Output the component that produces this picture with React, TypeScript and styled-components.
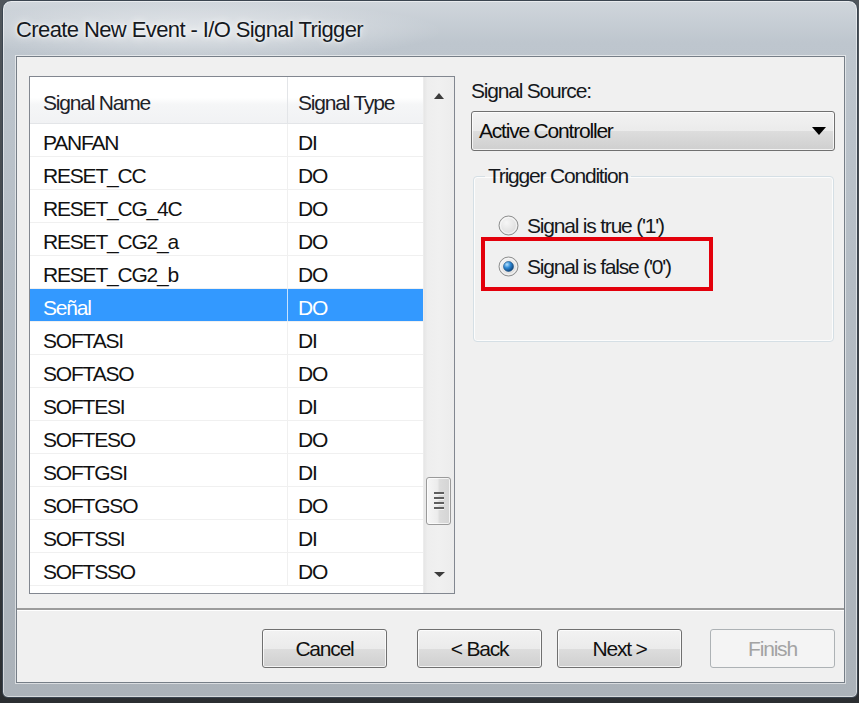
import React from "react";
import styled, { createGlobalStyle, css } from "styled-components";

const UI_FONT = `"Liberation Sans", Arial, sans-serif`;

// Segoe UI in the reference is narrower than Arial metrics: tighten tracking
const uiText = css`
  font-family: ${UI_FONT};
  font-size: 21px;
  letter-spacing: -1.2px;
`;

const GlobalStyle = createGlobalStyle`
  html, body {
    margin: 0;
    padding: 0;
  }
  body {
    background: #2e3236;
    font-family: ${UI_FONT};
    overflow: hidden;
  }
`;

const Desktop = styled.div`
  width: 859px;
  height: 703px;
  box-sizing: border-box;
  padding: 0 1px 0 2px;
  background: linear-gradient(180deg, #50565c 0%, #2b2e31 100%);
`;

const Window = styled.div`
  width: 856px;
  height: 698px;
  box-sizing: border-box;
  display: flex;
  flex-direction: column;
  border: 1px solid #3b4550;
  border-radius: 9px 9px 6px 6px;
  background: linear-gradient(180deg, #d0d6dc 0%, #bec6ce 6%, #b4bcc4 40%, #abb2b9 100%);
  box-shadow: inset 0 0 0 1px rgba(255, 255, 255, 0.5);
`;

const TitleBar = styled.div`
  height: 55px;
  box-sizing: border-box;
  flex-shrink: 0;
  display: flex;
  align-items: center;
  padding: 2px 0 0 13px;
  background: radial-gradient(ellipse 250px 30px at 190px 30px, rgba(255, 255, 255, 0.55), rgba(255, 255, 255, 0) 100%);
`;

const Title = styled.span`
  font-family: ${UI_FONT};
  font-size: 22px;
  letter-spacing: -0.6px;
  color: #161a1f;
  text-shadow: 0 0 8px rgba(255, 255, 255, 0.95), 0 0 3px rgba(255, 255, 255, 0.9);
`;

const Client = styled.div`
  flex: 1;
  margin: 0 12px 14px 13px;
  display: flex;
  flex-direction: column;
  border: 1px solid #767e87;
  background: #f0f0f0;
  box-shadow: 0 0 0 1px rgba(255, 255, 255, 0.55);
`;

const Body = styled.div`
  height: 551px;
  box-sizing: border-box;
  display: flex;
  padding: 19px 9px 0 12px;
`;

const ListBox = styled.div`
  width: 426px;
  height: 518px;
  box-sizing: border-box;
  display: flex;
  border: 1px solid #828790;
  background: #fff;
  overflow: hidden;
`;

const Table = styled.div`
  flex: 1;
  display: flex;
  flex-direction: column;
`;

const columns = css`
  display: grid;
  grid-template-columns: 258px 1fr;
`;

const HeaderRow = styled.div`
  ${columns};
  height: 47px;
  box-sizing: border-box;
  border-bottom: 1px solid #e3e5e8;
  background: linear-gradient(180deg, #ffffff 0%, #ffffff 45%, #f5f6f7 60%, #f1f2f4 100%);
`;

const HeaderCell = styled.div<{ $first?: boolean }>`
  ${uiText};
  padding: 13px 0 0 ${({ $first }) => ($first ? "13px" : "10px")};
  line-height: 26px;
  color: #1e2228;
  border-right: 1px solid ${({ $first }) => ($first ? "#e3e5e8" : "transparent")};
`;

const Row = styled.div<{ $selected?: boolean }>`
  ${columns};
  height: 33px;
  box-sizing: border-box;
  border-bottom: 1px solid #f0f0f0;
  background: ${({ $selected }) => ($selected ? "#3399ff" : "#fff")};
  color: ${({ $selected }) => ($selected ? "#fff" : "#111")};
`;

const Cell = styled.div<{ $first?: boolean; $selected?: boolean }>`
  ${uiText};
  padding: 5px 0 0 ${({ $first }) => ($first ? "13px" : "10px")};
  line-height: 27px;
  white-space: nowrap;
  border-right: 1px solid
    ${({ $first, $selected }) => (!$first ? "transparent" : $selected ? "#c7e2ff" : "#f0f0f0")};
`;

const ScrollBar = styled.div`
  width: 31px;
  display: flex;
  flex-direction: column;
  background: linear-gradient(90deg, #e6e6e6 0%, #eeeeee 12%, #f0f0f0 50%, #ececec 100%);
  border-left: 1px solid #ececec;
  box-sizing: border-box;
`;

const ScrollArrow = styled.div`
  height: 38px;
  display: flex;
  align-items: center;
  justify-content: center;
`;

const ScrollTrack = styled.div`
  flex: 1;
  position: relative;
`;

const Thumb = styled.div`
  position: absolute;
  left: 2px;
  width: 25px;
  height: 48px;
  box-sizing: border-box;
  border: 1px solid #9a9a9a;
  border-radius: 3px;
  background: linear-gradient(90deg, #f6f6f6 0%, #ececec 45%, #dcdcdc 55%, #d4d4d4 100%);
  box-shadow: inset 0 0 0 1px rgba(255, 255, 255, 0.7);
  display: flex;
  flex-direction: column;
  align-items: center;
  justify-content: center;
  gap: 2px;
`;

const GripLine = styled.span`
  width: 10px;
  height: 2px;
  background: #5e5e5e;
  border-bottom: 1px solid #f4f4f4;
`;

const RightPanel = styled.div`
  flex: 1;
  margin-left: 16px;
  display: flex;
  flex-direction: column;
`;

const FieldLabel = styled.div`
  ${uiText};
  line-height: 30px;
  color: #15181c;
`;

const Combo = styled.div`
  ${uiText};
  margin-top: 5px;
  height: 40px;
  box-sizing: border-box;
  display: flex;
  align-items: center;
  justify-content: space-between;
  padding: 0 8px 0 7px;
  border: 1px solid #707070;
  border-radius: 3px;
  background: linear-gradient(180deg, #f2f2f2 0%, #ebebeb 50%, #dddddd 51%, #cfcfcf 100%);
  box-shadow: inset 0 0 0 1px rgba(255, 255, 255, 0.75);
  color: #0c0c0c;
`;

const GroupBox = styled.fieldset`
  margin: 12px 1px 0 2px;
  padding: 16px 0 54px 0;
  border: 1px solid #d5dfe5;
  border-radius: 4px;
  box-shadow: inset 0 0 0 1px rgba(255, 255, 255, 0.8);
`;

const Legend = styled.legend`
  ${uiText};
  margin-left: 11px;
  padding: 0 3px;
  line-height: 26px;
  color: #15181c;
`;

const RadioRow = styled.label`
  ${uiText};
  position: relative;
  height: 41px;
  display: flex;
  align-items: center;
  gap: 8px;
  padding-left: 24px;
  line-height: 26px;
  color: #15181c;
`;

const Highlighted = styled(RadioRow)`
  &::after {
    content: "";
    position: absolute;
    left: 7px;
    top: -9px;
    bottom: -4px;
    width: 232px;
    box-sizing: border-box;
    border: 4px solid #e3000b;
    pointer-events: none;
  }
`;

const Separator = styled.div`
  height: 2px;
  background: #9c9c9c;
  border-bottom: 1px solid #ffffff;
`;

const Footer = styled.div`
  flex: 1;
  display: flex;
  justify-content: flex-end;
  align-items: flex-start;
  padding: 18px 9px 0 0;
`;

const Button = styled.button<{ $gap?: number }>`
  ${uiText};
  width: 125px;
  height: 39px;
  margin: 0 0 0 ${({ $gap }) => $gap ?? 0}px;
  padding: 0;
  border: 1px solid #707070;
  border-radius: 3px;
  background: linear-gradient(180deg, #f2f2f2 0%, #ebebeb 50%, #dddddd 51%, #cfcfcf 100%);
  box-shadow: inset 0 0 0 1px rgba(255, 255, 255, 0.75);
  color: #111;
  &:disabled {
    border-color: #adb2b5;
    background: #f4f4f4;
    color: #a3a3a3;
    box-shadow: none;
  }
`;

const Radio = ({ checked }: { checked?: boolean }) => (
  <svg width="21" height="21" viewBox="0 0 21 21">
    <defs>
      <radialGradient id={checked ? "rfOn" : "rfOff"} cx="0.4" cy="0.35" r="0.7">
        <stop offset="0" stopColor="#f6f6f6" />
        <stop offset="1" stopColor="#d9d9d9" />
      </radialGradient>
      <radialGradient id="dot" cx="0.35" cy="0.3" r="0.75">
        <stop offset="0" stopColor="#b5e2ff" />
        <stop offset="0.45" stopColor="#2f8ad6" />
        <stop offset="1" stopColor="#0b3f75" />
      </radialGradient>
    </defs>
    <circle cx="10.5" cy="10.5" r="9.5" fill={`url(#${checked ? "rfOn" : "rfOff"})`} stroke="#8e8f8f" />
    <circle cx="10.5" cy="10.5" r="8" fill="none" stroke="#ffffff" strokeOpacity="0.7" />
    {checked && <circle cx="10.5" cy="10.5" r="5" fill="url(#dot)" stroke="#1c4f7e" strokeWidth="0.6" />}
  </svg>
);

const Triangle = ({ up, w, h, color }: { up?: boolean; w: number; h: number; color: string }) => (
  <svg width={w} height={h} viewBox={`0 0 ${w} ${h}`}>
    <polygon points={up ? `0,${h} ${w},${h} ${w / 2},0` : `0,0 ${w},0 ${w / 2},${h}`} fill={color} />
  </svg>
);

const signals: [string, string][] = [
  ["PANFAN", "DI"],
  ["RESET_CC", "DO"],
  ["RESET_CG_4C", "DO"],
  ["RESET_CG2_a", "DO"],
  ["RESET_CG2_b", "DO"],
  ["Señal", "DO"],
  ["SOFTASI", "DI"],
  ["SOFTASO", "DO"],
  ["SOFTESI", "DI"],
  ["SOFTESO", "DO"],
  ["SOFTGSI", "DI"],
  ["SOFTGSO", "DO"],
  ["SOFTSSI", "DI"],
  ["SOFTSSO", "DO"],
];

const selected = "Señal";
const scrollPos = 0.923;
const trackLen = 440;
const thumbLen = 48;

export default function App() {
  return (
    <>
      <GlobalStyle />
      <Desktop>
        <Window>
          <TitleBar>
            <Title>Create New Event - I/O Signal Trigger</Title>
          </TitleBar>
          <Client>
            <Body>
              <ListBox>
                <Table>
                  <HeaderRow>
                    <HeaderCell $first>Signal Name</HeaderCell>
                    <HeaderCell>Signal Type</HeaderCell>
                  </HeaderRow>
                  {signals.map(([name, type]) => {
                    const sel = name === selected;
                    return (
                      <Row key={name} $selected={sel}>
                        <Cell $first $selected={sel}>{name}</Cell>
                        <Cell>{type}</Cell>
                      </Row>
                    );
                  })}
                </Table>
                <ScrollBar>
                  <ScrollArrow>
                    <Triangle up w={10} h={6} color="#3c3c3c" />
                  </ScrollArrow>
                  <ScrollTrack>
                    <Thumb style={{ top: Math.round(scrollPos * (trackLen - thumbLen)) }}>
                      <GripLine />
                      <GripLine />
                      <GripLine />
                      <GripLine />
                    </Thumb>
                  </ScrollTrack>
                  <ScrollArrow>
                    <Triangle w={11} h={5} color="#3c3c3c" />
                  </ScrollArrow>
                </ScrollBar>
              </ListBox>
              <RightPanel>
                <FieldLabel>Signal Source:</FieldLabel>
                <Combo>
                  <span>Active Controller</span>
                  <Triangle w={14} h={8} color="#000" />
                </Combo>
                <GroupBox>
                  <Legend>Trigger Condition</Legend>
                  <RadioRow>
                    <Radio />
                    <span>Signal is true ('1')</span>
                  </RadioRow>
                  <Highlighted>
                    <Radio checked />
                    <span>Signal is false ('0')</span>
                  </Highlighted>
                </GroupBox>
              </RightPanel>
            </Body>
            <Separator />
            <Footer>
              <Button>Cancel</Button>
              <Button $gap={30}>&lt; Back</Button>
              <Button $gap={15}>Next &gt;</Button>
              <Button $gap={28} disabled>
                Finish
              </Button>
            </Footer>
          </Client>
        </Window>
      </Desktop>
    </>
  );
}
